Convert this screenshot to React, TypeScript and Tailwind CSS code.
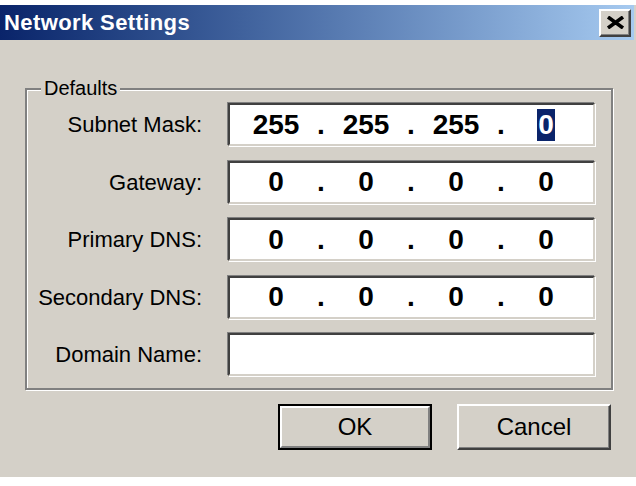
import React from 'react';

type Row = { label: string; octets?: string[]; selectLast?: boolean };

const rows: Row[] = [
  { label: 'Subnet Mask:', octets: ['255', '255', '255', '0'], selectLast: true },
  { label: 'Gateway:', octets: ['0', '0', '0', '0'] },
  { label: 'Primary DNS:', octets: ['0', '0', '0', '0'] },
  { label: 'Secondary DNS:', octets: ['0', '0', '0', '0'] },
  { label: 'Domain Name:' },
];

const sunken =
  'border-2 border-t-[#404040] border-l-[#404040] border-b-[#d4d0c8] border-r-[#d4d0c8] shadow-[-1px_-1px_0_#808080,1px_1px_0_#ffffff] bg-white';

function IpField({ octets, selectLast }: { octets: string[]; selectLast?: boolean }) {
  return (
    <div className={`${sunken} h-[43px] w-[367px]`}>
      <div className="grid h-full grid-cols-[68px_22px_68px_22px_68px_22px_68px] items-center pl-[12px] text-[28px] font-bold text-black">
        {octets.map((o, i) => (
          <React.Fragment key={i}>
            <div className="flex justify-center leading-[32px]">
              {selectLast && i === 3 ? (
                <span className="bg-[#0a246a] px-[1px] text-white">{o}</span>
              ) : (
                o
              )}
            </div>
            {i < 3 ? <div className="text-center leading-[32px]">.</div> : null}
          </React.Fragment>
        ))}
      </div>
    </div>
  );
}

function CloseGlyph() {
  return (
    <svg width="19" height="13" viewBox="0 0 19 13">
      <path d="M2 1 L17 12 M17 1 L2 12" stroke="#000" strokeWidth="3.6" />
    </svg>
  );
}

export default function App() {
  return (
    <div
      className="flex h-[486px] w-[636px] flex-col bg-white"
      style={{ fontFamily: '"Liberation Sans", Arial, sans-serif' }}
    >
      <div className="mt-[5px] flex h-[472px] flex-col bg-[#d4d0c8]">
        {/* title bar */}
        <div className="mr-[2px] flex h-[35px] items-center justify-between bg-gradient-to-r from-[#0a246a] to-[#a6caf0] pl-[4px] pr-[3px]">
          <span className="text-[22px] font-bold tracking-[0.4px] text-white">Network Settings</span>
          <button className="flex h-[28px] w-[32px] items-center justify-center border-2 border-t-white border-l-white border-b-[#404040] border-r-[#404040] bg-[#d4d0c8] shadow-[inset_-1px_-1px_0_#808080]">
            <CloseGlyph />
          </button>
        </div>

        <div className="flex flex-col pl-[25px] pr-[23px] pt-[48px]">
          {/* group box */}
          <div className="relative border-2 border-[#808080] shadow-[inset_1px_1px_0_#ffffff,1px_1px_0_#ffffff] pb-[12px] pt-[13px]">
            <span className="absolute -top-[14px] left-[14px] bg-[#d4d0c8] px-[3px] text-[20px] leading-[24px] text-black">
              Defaults
            </span>
            <div className="flex flex-col gap-[14.5px]">
              {rows.map((r) => (
                <div key={r.label} className="flex items-center">
                  <div className="w-[175px] pr-[0px] text-right text-[22px] text-black">{r.label}</div>
                  <div className="ml-[26px]">
                    {r.octets ? (
                      <IpField octets={r.octets} selectLast={r.selectLast} />
                    ) : (
                      <div className={`${sunken} h-[43px] w-[367px]`} />
                    )}
                  </div>
                </div>
              ))}
            </div>
          </div>

          {/* buttons */}
          <div className="mt-[14px] flex justify-end gap-[25px] pr-[2px]">
            <button className="h-[46px] w-[154px] border-2 border-black bg-[#d4d0c8]">
              <div className="flex h-full w-full items-center justify-center border-2 border-t-white border-l-white border-b-[#808080] border-r-[#808080] text-[24px] text-black">
                OK
              </div>
            </button>
            <button className="flex h-[46px] w-[154px] items-center justify-center border-2 border-t-white border-l-white border-b-[#404040] border-r-[#404040] bg-[#d4d0c8] text-[24px] text-black shadow-[inset_-1px_-1px_0_#808080]">
              Cancel
            </button>
          </div>
        </div>
      </div>
    </div>
  );
}
